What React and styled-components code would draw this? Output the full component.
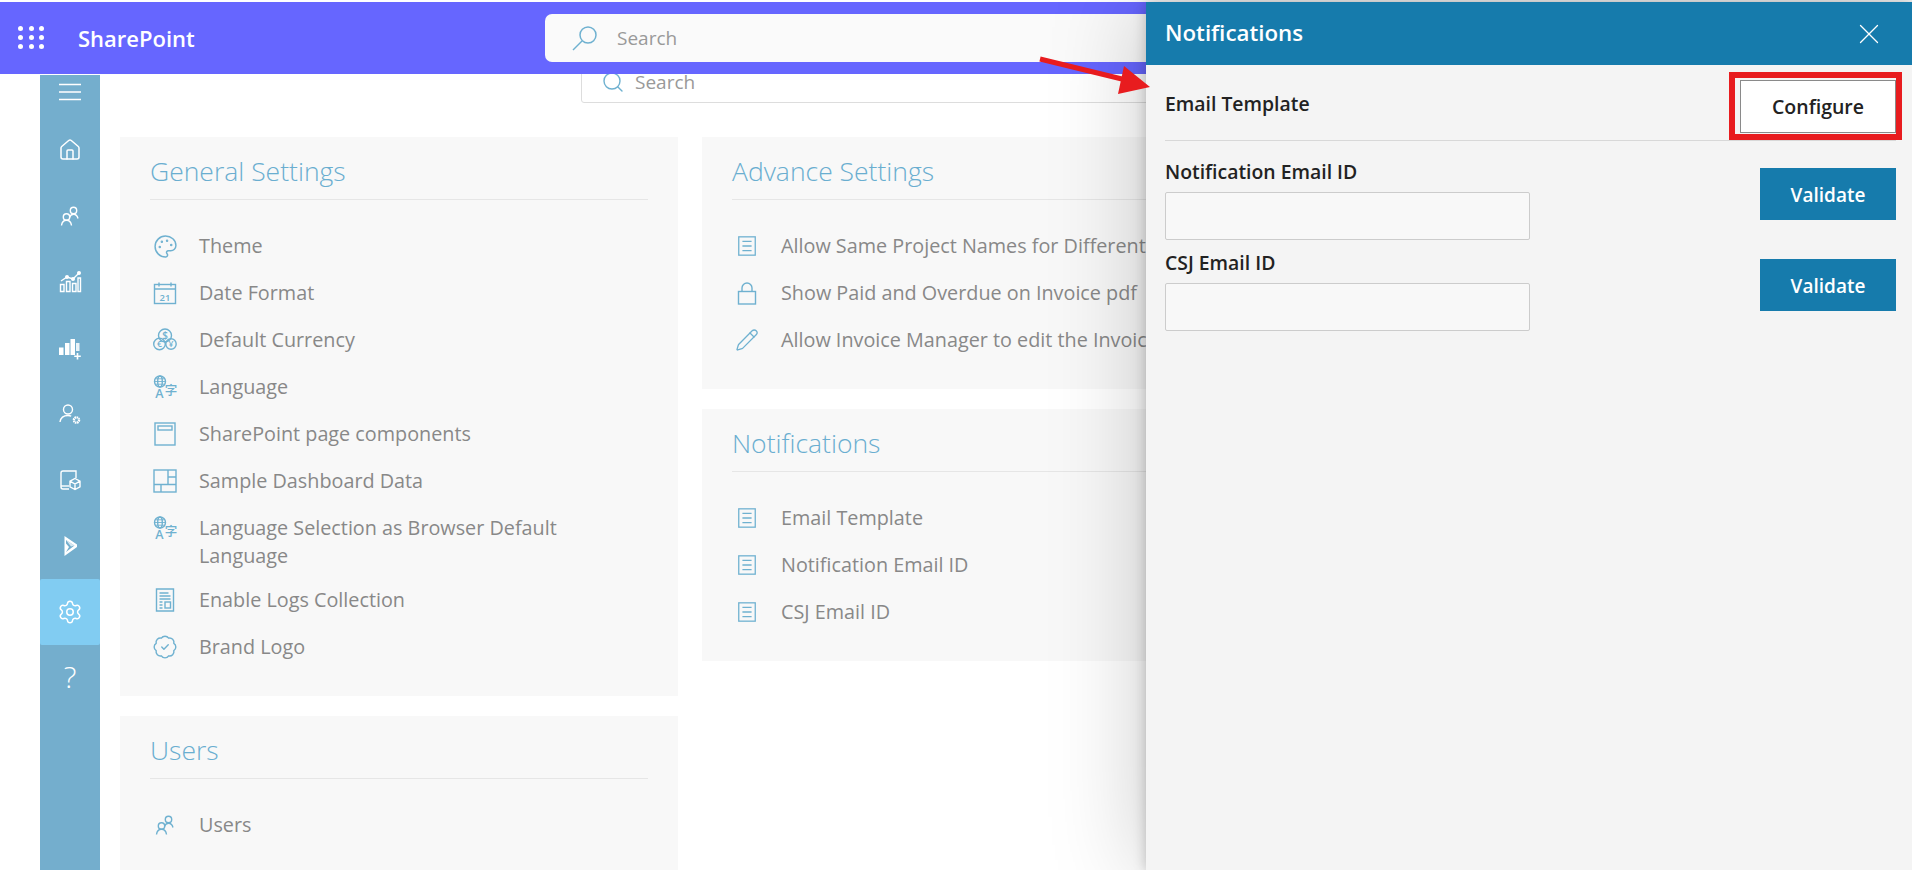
import React from 'react';
import styled, { createGlobalStyle } from 'styled-components';
import { Home, Settings, Palette, Pencil, BadgeCheck, Search, X } from 'lucide-react';

const FONT = '"Open Sans", "Noto Sans", "Noto Sans CJK SC", "Liberation Sans", sans-serif';

const GlobalStyle = createGlobalStyle`
  html, body {
    margin: 0;
    height: 100%;
    background: #fff;
    font-family: ${FONT};
  }
  * { box-sizing: border-box; }
`;

const Page = styled.div`
  position: relative;
  height: 870px;
  padding-top: 2px;
  overflow: hidden;
  display: flex;
  flex-direction: column;
`;

// Top bar
const TopBar = styled.header`
  position: relative;
  z-index: 1;
  flex: none;
  height: 72px;
  margin-bottom: 1px;
  background: #6666ff;
  display: flex;
  align-items: center;
  padding-left: 18px;
  color: #fff;
`;

const Waffle = styled.div`
  display: grid;
  grid-template-columns: repeat(3, 5px);
  gap: 4px 5.500px;
  margin-right: 34px;
  margin-top: -2px;

  span {
    width: 5px;
    height: 5px;
    border-radius: 50%;
    background: #fff;
  }
`;

const Brand = styled.div`
  font-size: 22px;
  font-weight: 600;
  width: 467px;
`;

const TopSearch = styled.div`
  width: 800px;
  height: 48px;
  background: #fafafa;
  border-radius: 7px;
  display: flex;
  align-items: center;
  padding-left: 26px;
  gap: 18px;
  color: #999;
  font-size: 19px;
`;

// Body
const Body = styled.div`
  flex: 1;
  min-height: 0;
  display: flex;
  padding-left: 40px;
`;

const Sidebar = styled.nav`
  flex: none;
  width: 60px;
  background: #74aecd;
  color: #fff;
`;

const MenuButton = styled.div`
  height: 42px;
  padding-bottom: 8px;
  display: flex;
  align-items: center;
  justify-content: center;
`;

const NavItem = styled.div`
  height: 66px;
  display: flex;
  align-items: center;
  justify-content: center;
  border-radius: 2px;
  background: ${(p) => (p.$active ? '#81ccf2' : 'transparent')};
`;

const Content = styled.main`
  flex: 1;
  min-width: 0;
  padding-left: 20px;
`;

const PageSearch = styled.div`
  width: 720px;
  height: 42px;
  margin: -14px 0 34px 461px;
  border: 1px solid #ddd;
  border-radius: 3px;
  display: flex;
  align-items: center;
  padding: 0 0 0 19px;
  gap: 10px;
  color: #999;
  font-size: 19px;
`;

const Columns = styled.div`
  display: grid;
  grid-template-columns: 558px 558px;
  gap: 24px;
  align-items: start;
`;

const Column = styled.div`
  display: flex;
  flex-direction: column;
  gap: 19.500px;
`;

const Card = styled.section`
  background: #f8f8f8;
  padding: 0 30px 35px;
`;

const CardTitle = styled.h2`
  margin: 0;
  height: 63px;
  padding-top: 16px;
  border-bottom: 1px solid #e6e6e6;
  color: #6aaed0;
  font-size: 26.500px;
  line-height: 36px;
  font-weight: 300;
  white-space: nowrap;
`;

const RowList = styled.ul`
  list-style: none;
  margin: 32px 0 0;
  padding: 0;
  display: flex;
  flex-direction: column;
  gap: 19px;
`;

const Row = styled.li`
  display: flex;
  align-items: flex-start;
  color: #888;
  font-size: 19.800px;
  line-height: 28px;
  white-space: ${(p) => (p.$wrap ? 'normal' : 'nowrap')};
  padding-right: ${(p) => (p.$wrap ? '30px' : '0')};
  margin-bottom: ${(p) => (p.$wrap ? '-3px' : '0')};
`;

const RowIcon = styled.span`
  flex: none;
  width: 49px;
  height: 28px;
  padding-right: 19px;
  display: flex;
  align-items: center;
  justify-content: center;
  color: #6fb1d0;
`;

// Notifications panel
const Panel = styled.aside`
  position: absolute;
  z-index: 2;
  top: 2px;
  right: 0;
  bottom: 0;
  width: 766px;
  background: #f4f4f4;
  box-shadow: 0 0 12px rgba(0, 0, 0, 0.22), 0 0 90px rgba(0, 0, 0, 0.22);
`;

const PanelHeader = styled.div`
  height: 63px;
  background: #167bac;
  color: #fff;
  display: flex;
  align-items: center;
  justify-content: space-between;
  padding: 0 26px 3px 19px;
  font-size: 22.300px;
  font-weight: 600;

  svg {
    margin-top: 3px;
  }
`;

const PanelBody = styled.div`
  padding: 0 16px 0 19px;
`;

const TemplateRow = styled.div`
  height: 76px;
  padding-top: 2px;
  display: flex;
  align-items: center;
  justify-content: space-between;
  border-bottom: 1px solid #d8d8d8;
`;

const PanelLabel = styled.div`
  color: #222;
  font-size: 19.400px;
  line-height: 24px;
  font-weight: 600;
`;

const ConfigureButton = styled.button`
  width: 156px;
  height: 53px;
  margin-top: 6px;
  padding: 0;
  background: #fff;
  border: 1px solid #8a8a8a;
  color: #222;
  font-family: inherit;
  font-size: 19.500px;
  font-weight: 600;
`;

const FieldList = styled.div`
  padding-top: 19px;
`;

const FieldRow = styled.div`
  display: flex;
  justify-content: space-between;
  align-items: flex-start;
  height: 91px;
`;

const Field = styled.div`
  display: flex;
  flex-direction: column;
  gap: 8px;
`;

const TextInput = styled.input`
  width: 365px;
  height: 48px;
  background: #f8f8f8;
  border: 1px solid #ccc;
  border-radius: 2px;
`;

const ValidateButton = styled.button`
  width: 136px;
  height: 52px;
  margin-top: 8px;
  padding: 2px 0 0;
  background: #167bac;
  border: none;
  color: #fff;
  font-family: inherit;
  font-size: 19px;
  font-weight: 600;
`;

// Annotations drawn over the screenshot
const Highlight = styled.div`
  position: absolute;
  z-index: 3;
  left: 1729px;
  top: 72px;
  width: 173px;
  height: 68px;
  border: 6px solid #e81c1f;
  pointer-events: none;
`;

const ArrowMark = styled.svg`
  position: absolute;
  z-index: 3;
  left: 1030px;
  top: 50px;
`;

const IconSvg = styled.svg`
  overflow: visible;
`;

// Icons
const Svg = ({ size = 24, children }) => (
  <IconSvg width={size} height={size} viewBox="0 0 24 24" fill="none" stroke="currentColor" strokeWidth="1.400">
    {children}
  </IconSvg>
);

const MenuIcon = () => (
  <svg width="22" height="18" viewBox="0 0 22 18" stroke="currentColor" strokeWidth="1.300">
    <path d="M0 1.500h22M0 9h22M0 16.500h22" />
  </svg>
);

const UsersIcon = () => (
  <Svg>
    <circle cx="15.500" cy="6.500" r="3.200" />
    <path d="M11.500 13.500c.6-2 2.200-3.300 4-3.300 2.300 0 3.900 1.800 4.500 4.300" />
    <circle cx="8.500" cy="13" r="3.200" />
    <path d="M3.500 21.500c.4-3 2.400-5.200 5-5.200s4.600 2.200 5 5.200" />
  </Svg>
);

const GrowthIcon = () => (
  <Svg>
    <path d="M2.500 21.500v-7h3.500v7zM8.500 21.500v-10H12v10zM14.500 21.500v-8H18v8zM20 21.500V8h2.500v13.500z" />
    <path d="M3 11l6-4 6 2 6-6" />
    <circle cx="9" cy="7" r="1.300" fill="currentColor" />
    <circle cx="15" cy="9" r="1.300" fill="currentColor" />
    <circle cx="21" cy="3" r="1.300" fill="currentColor" />
  </Svg>
);

const BarsPlusIcon = () => (
  <Svg>
    <path fill="currentColor" stroke="none" d="M1 11.500h4.500V19H1zM7 7h4.500v12H7zM12.500 3H17v16h-4.500z" />
    <path fill="currentColor" stroke="none" opacity=".85" d="M18 7h3.500v8H18z" />
    <path strokeWidth="1.600" d="M19.500 17v6.500M16.200 20.200h6.600" />
  </Svg>
);

const UserGearIcon = () => (
  <Svg>
    <circle cx="10" cy="7.500" r="4.500" />
    <path d="M2 20c.6-4 3.600-6.500 8-6.500 1.200 0 2.300.2 3.200.6" />
    <circle cx="18.500" cy="18" r="2.600" strokeWidth="2.400" strokeDasharray="1.500 .5" />
  </Svg>
);

const DeviceBoxIcon = () => (
  <Svg>
    <path d="M18 10V3H5a2 2 0 0 0-2 2v14a2 2 0 0 0 2 2h6" />
    <path d="M3 18h8" />
    <path d="M17 10.500l5 2.700v5.600l-5 2.700-5-2.700v-5.600zM12 13.200l5 2.800 5-2.800M17 16v5.500" />
  </Svg>
);

const PlayLogoIcon = () => (
  <Svg>
    <path fill="currentColor" stroke="none" fillRule="evenodd" d="M6.500 2L19 10.500v2.500L6.500 22zM8 6v3.500l3 3.500-3 5 8.500-6.500z" />
    <path fill="currentColor" stroke="none" opacity=".7" d="M8 6l8.500 5.500L13 12.500z" />
  </Svg>
);

const CalendarIcon = () => (
  <Svg>
    <rect x="1.500" y="3.500" width="21" height="19" />
    <path d="M1.500 8h21M6 1.500v4M18 1.500v4" />
    <text x="12" y="19.500" textAnchor="middle" fontSize="9.500" fontWeight="600" stroke="none" fill="currentColor" fontFamily={FONT}>21</text>
  </Svg>
);

const CurrencyIcon = () => (
  <Svg>
    <circle cx="12" cy="7.500" r="6.500" />
    <circle cx="6.500" cy="16" r="5.800" />
    <circle cx="18" cy="16" r="5.200" />
    <text x="12" y="11" textAnchor="middle" fontSize="10" fontWeight="600" stroke="none" fill="currentColor" fontFamily={FONT}>$</text>
    <text x="6.500" y="19" textAnchor="middle" fontSize="8.500" fontWeight="600" stroke="none" fill="currentColor" fontFamily={FONT}>€</text>
    <text x="18" y="19" textAnchor="middle" fontSize="8.500" fontWeight="600" stroke="none" fill="currentColor" fontFamily={FONT}>¥</text>
  </Svg>
);

const LanguageIcon = () => (
  <Svg>
    <circle cx="7" cy="6.500" r="5.500" />
    <ellipse cx="7" cy="6.500" rx="2.300" ry="5.500" />
    <path d="M1.500 6.500h11M2.500 3.800h9M2.500 9.200h9" strokeWidth=".9" />
    <text x="6.500" y="23" textAnchor="middle" fontSize="12.500" fontWeight="600" stroke="none" fill="currentColor" fontFamily={FONT}>A</text>
    <text x="18" y="19.500" textAnchor="middle" fontSize="12.500" fontWeight="500" stroke="none" fill="currentColor" fontFamily={FONT}>字</text>
  </Svg>
);

const PageIcon = () => (
  <Svg>
    <rect x="2" y="1" width="20" height="22" />
    <rect x="5" y="4" width="14" height="4" />
  </Svg>
);

const DashboardIcon = () => (
  <Svg>
    <rect x="1" y="1" width="22" height="22" />
    <path d="M1 15.500h22M15 1v14.500M15 8h8M8 15.500V23" />
  </Svg>
);

const LogIcon = () => (
  <Svg>
    <path d="M3.500 1h17v22h-17z" />
    <path d="M6.500 5h9M6.500 8h11M6.500 11h11M6.500 14h3M6.500 17h3M6.500 20h3" />
    <rect x="12" y="14" width="5.500" height="6" />
  </Svg>
);

const DocIcon = () => (
  <Svg size={22}>
    <rect x="3" y="2" width="18" height="20" />
    <path d="M7 7h10M7 12h10M7 17h10" />
  </Svg>
);

const LockIcon = () => (
  <Svg>
    <rect x="3.500" y="10.500" width="17" height="12.500" />
    <path d="M7 10.500V7a5 5 0 0 1 10 0v3.500" />
  </Svg>
);

const HelpMark = styled.span`
  font-size: 30px;
  font-weight: 300;
  margin-top: -4px;
`;

const generalSettings = [
  { label: 'Theme', icon: <Palette size={25} strokeWidth={1.4} /> },
  { label: 'Date Format', icon: <CalendarIcon /> },
  { label: 'Default Currency', icon: <CurrencyIcon /> },
  { label: 'Language', icon: <LanguageIcon /> },
  { label: 'SharePoint page components', icon: <PageIcon /> },
  { label: 'Sample Dashboard Data', icon: <DashboardIcon /> },
  { label: 'Language Selection as Browser Default Language', icon: <LanguageIcon />, wrap: true },
  { label: 'Enable Logs Collection', icon: <LogIcon /> },
  { label: 'Brand Logo', icon: <BadgeCheck size={26} strokeWidth={1.3} /> },
];

const advanceSettings = [
  { label: 'Allow Same Project Names for Different', icon: <DocIcon /> },
  { label: 'Show Paid and Overdue on Invoice pdf', icon: <LockIcon /> },
  { label: 'Allow Invoice Manager to edit the Invoice', icon: <Pencil size={24} strokeWidth={1.3} /> },
];

const notificationSettings = [
  { label: 'Email Template', icon: <DocIcon /> },
  { label: 'Notification Email ID', icon: <DocIcon /> },
  { label: 'CSJ Email ID', icon: <DocIcon /> },
];

const navIcons = [
  <Home key="home" size={24} strokeWidth={1.5} />,
  <UsersIcon key="users" />,
  <GrowthIcon key="growth" />,
  <BarsPlusIcon key="bars" />,
  <UserGearIcon key="usergear" />,
  <DeviceBoxIcon key="device" />,
  <PlayLogoIcon key="play" />,
];

const SettingsCard = ({ title, rows }) => (
  <Card>
    <CardTitle>{title}</CardTitle>
    <RowList>
      {rows.map((row) => (
        <Row key={row.label} $wrap={row.wrap}>
          <RowIcon>{row.icon}</RowIcon>
          <span>{row.label}</span>
        </Row>
      ))}
    </RowList>
  </Card>
);

const App = () => (
  <Page>
    <GlobalStyle />
    <TopBar>
      <Waffle>
        {Array.from({ length: 9 }, (_, i) => <span key={i} />)}
      </Waffle>
      <Brand>SharePoint</Brand>
      <TopSearch>
        <svg width="28" height="28" viewBox="0 0 28 28" fill="none" stroke="#6fb1d0" strokeWidth="1.500">
          <circle cx="17" cy="11" r="8" />
          <path d="M11 17L2 26" />
        </svg>
        Search
      </TopSearch>
    </TopBar>
    <Body>
      <Sidebar>
        <MenuButton><MenuIcon /></MenuButton>
        {navIcons.map((icon) => <NavItem key={icon.key}>{icon}</NavItem>)}
        <NavItem $active><Settings size={26} strokeWidth={1.4} /></NavItem>
        <NavItem><HelpMark>?</HelpMark></NavItem>
      </Sidebar>
      <Content>
        <PageSearch>
          <Search size={24} strokeWidth={1.4} color="#6fb1d0" />
          Search
        </PageSearch>
        <Columns>
          <Column>
            <SettingsCard title="General Settings" rows={generalSettings} />
            <SettingsCard title="Users" rows={[{ label: 'Users', icon: <UsersIcon /> }]} />
          </Column>
          <Column>
            <SettingsCard title="Advance Settings" rows={advanceSettings} />
            <SettingsCard title="Notifications" rows={notificationSettings} />
          </Column>
        </Columns>
      </Content>
    </Body>
    <Panel>
      <PanelHeader>
        Notifications
        <X size={34} strokeWidth={0.9} />
      </PanelHeader>
      <PanelBody>
        <TemplateRow>
          <PanelLabel>Email Template</PanelLabel>
          <ConfigureButton>Configure</ConfigureButton>
        </TemplateRow>
        <FieldList>
          <FieldRow>
            <Field>
              <PanelLabel>Notification Email ID</PanelLabel>
              <TextInput />
            </Field>
            <ValidateButton>Validate</ValidateButton>
          </FieldRow>
          <FieldRow>
            <Field>
              <PanelLabel>CSJ Email ID</PanelLabel>
              <TextInput />
            </Field>
            <ValidateButton>Validate</ValidateButton>
          </FieldRow>
        </FieldList>
      </PanelBody>
    </Panel>
    <ArrowMark width="130" height="50" viewBox="0 0 130 50">
      <path d="M10 9L96 30" stroke="#e81c1f" strokeWidth="5" />
      <path d="M94 16L120 37 88 44z" fill="#e81c1f" />
    </ArrowMark>
    <Highlight />
  </Page>
);

export default App;
